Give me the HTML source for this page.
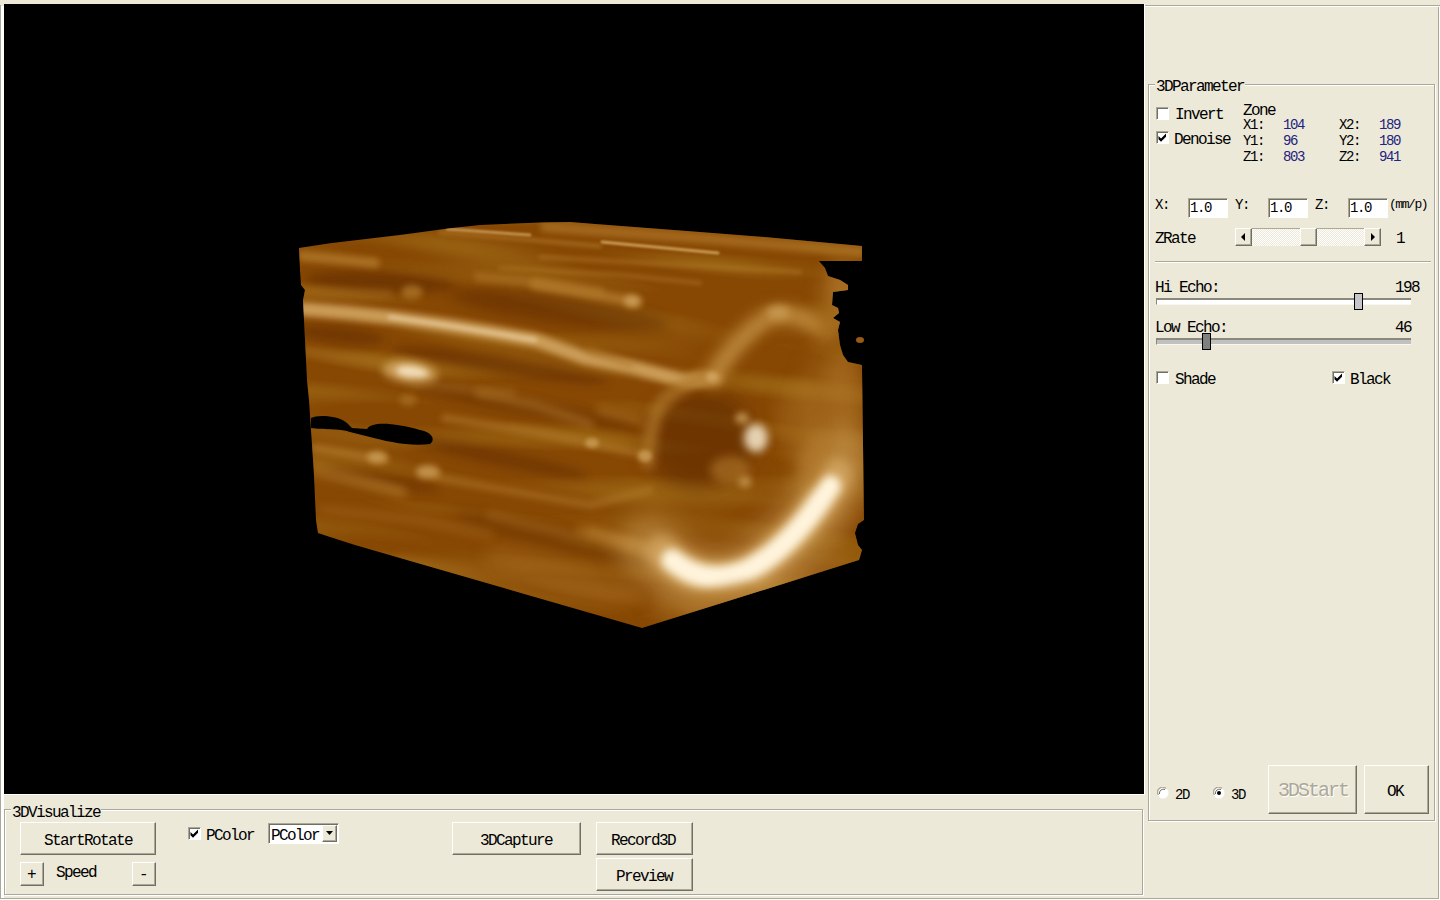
<!DOCTYPE html>
<html><head><meta charset="utf-8">
<style>
*{margin:0;padding:0;box-sizing:border-box}
html,body{width:1440px;height:900px;overflow:hidden;background:#ECE9D8;position:relative;font-family:"Liberation Mono";color:#000}
.a{position:absolute}
.t{position:absolute;font-size:16px;letter-spacing:-1.6px;line-height:16px;white-space:pre}
.s{position:absolute;font-size:14px;letter-spacing:-1.4px;line-height:14px;white-space:pre}
.gl{position:absolute;background:#ACA899}
.wl{position:absolute;background:#FFFFFF}
.etch{position:absolute;border:1px solid #ACA899;box-shadow:1px 1px 0 #fff, inset 1px 1px 0 #fff}
.btn{position:absolute;background:#ECE9D8;border-top:1px solid #fff;border-left:1px solid #fff;border-right:1px solid #716F64;border-bottom:1px solid #716F64;box-shadow:inset -1px -1px 0 #ACA899}
.cb{position:absolute;width:13px;height:13px;background:#fff;border-top:1px solid #ACA899;border-left:1px solid #ACA899;border-right:1px solid #fff;border-bottom:1px solid #fff;box-shadow:inset 1px 1px 0 #716F64}
.edit{position:absolute;background:#fff;border-top:1px solid #ACA899;border-left:1px solid #ACA899;border-right:1px solid #fff;border-bottom:1px solid #fff;box-shadow:inset 1px 1px 0 #716F64}
.lbl{background:#ECE9D8}
.blue{color:#22227F}
</style></head><body>
<!-- outer etched frame -->
<div class="gl" style="left:0;top:5px;width:1px;height:894px"></div>
<div class="wl" style="left:1px;top:6px;width:3px;height:892px"></div>
<div class="gl" style="left:0;top:898px;width:1439px;height:1px"></div>
<div class="wl" style="left:0;top:899px;width:1440px;height:1px"></div>
<div class="gl" style="left:1438px;top:5px;width:1px;height:894px"></div>
<div class="wl" style="left:1439px;top:5px;width:1px;height:895px"></div>
<div class="gl" style="left:1144px;top:5px;width:1295px;height:1px"></div>
<div class="wl" style="left:1144px;top:6px;width:1294px;height:1px"></div>

<!-- black view -->
<div class="a" id="view" style="left:4px;top:4px;width:1140px;height:790px;background:#000;overflow:hidden">
<svg width="1140" height="790" viewBox="4 4 1140 790" style="position:absolute;left:0;top:0">
<defs>
<clipPath id="cp"><polygon points="299,248 330,243.3 400,235 450,228.3 480,225 540,222.5 570,222 595,224 700,232 770,237.5 862,246 862,261 819,261 825,268 828,276 840,280 848,285 848,290 833,292 832,305 838,308 839,313 833,318 840,322 838,330 840,345 843,355 848,362 862,365 864,520 858,524 855,533 858,545 862,550 860,557 859,560 642,628 355,545 330,537 318,533 316,520 313.7,470 311,430 309,400 307,380 306,360 305,340 304,320 303,300 305,290 301,285 300,270"/></clipPath>
<filter id="b1" filterUnits="userSpaceOnUse" x="200" y="150" width="800" height="550"><feGaussianBlur stdDeviation="1"/></filter>
<filter id="b2" filterUnits="userSpaceOnUse" x="200" y="150" width="800" height="550"><feGaussianBlur stdDeviation="2"/></filter>
<filter id="b3" filterUnits="userSpaceOnUse" x="200" y="150" width="800" height="550"><feGaussianBlur stdDeviation="3"/></filter>
<filter id="b4" filterUnits="userSpaceOnUse" x="200" y="150" width="800" height="550"><feGaussianBlur stdDeviation="4"/></filter>
<filter id="b5" filterUnits="userSpaceOnUse" x="200" y="150" width="800" height="550"><feGaussianBlur stdDeviation="5"/></filter>
<filter id="b6" filterUnits="userSpaceOnUse" x="200" y="150" width="800" height="550"><feGaussianBlur stdDeviation="6"/></filter>
<filter id="b7" filterUnits="userSpaceOnUse" x="200" y="150" width="800" height="550"><feGaussianBlur stdDeviation="7"/></filter>
<filter id="b8" filterUnits="userSpaceOnUse" x="200" y="150" width="800" height="550"><feGaussianBlur stdDeviation="8"/></filter>
<filter id="b10" filterUnits="userSpaceOnUse" x="200" y="150" width="800" height="550"><feGaussianBlur stdDeviation="10"/></filter>
<filter id="b12" filterUnits="userSpaceOnUse" x="200" y="150" width="800" height="550"><feGaussianBlur stdDeviation="12"/></filter>
<filter id="turb" filterUnits="userSpaceOnUse" x="200" y="150" width="800" height="550"><feTurbulence type="fractalNoise" baseFrequency="0.005 0.04" numOctaves="1" seed="7"/><feColorMatrix type="matrix" values="0 0 0 0 0.45  0 0 0 0 0.25  0 0 0 0 0.02  0 0 0 -3.2 1.75"/></filter>
</defs>
<g clip-path="url(#cp)">
<rect x="290" y="215" width="590" height="420" fill="#874804"/>
<g transform="rotate(7 580 420)"><rect x="200" y="150" width="800" height="550" filter="url(#turb)" opacity="0.45"/></g>
<ellipse cx="700" cy="440" rx="55" ry="50" fill="#5a2800" opacity="0.55" transform="rotate(-10 700 440)" filter="url(#b10)"/>
<ellipse cx="560" cy="310" rx="110" ry="14" fill="#5a2800" opacity="0.45" transform="rotate(8 560 310)" filter="url(#b6)"/>
<ellipse cx="380" cy="282" rx="75" ry="10" fill="#5a2800" opacity="0.5" transform="rotate(3 380 282)" filter="url(#b5)"/>
<ellipse cx="340" cy="335" rx="45" ry="8" fill="#5a2800" opacity="0.45" transform="rotate(6 340 335)" filter="url(#b4)"/>
<ellipse cx="500" cy="365" rx="110" ry="8" fill="#5a2800" opacity="0.45" transform="rotate(9 500 365)" filter="url(#b4)"/>
<ellipse cx="520" cy="405" rx="120" ry="8" fill="#5a2800" opacity="0.4" transform="rotate(11 520 405)" filter="url(#b4)"/>
<ellipse cx="380" cy="480" rx="60" ry="7" fill="#5a2800" opacity="0.35" transform="rotate(10 380 480)" filter="url(#b4)"/>
<ellipse cx="500" cy="458" rx="90" ry="8" fill="#5a2800" opacity="0.4" transform="rotate(12 500 458)" filter="url(#b4)"/>
<ellipse cx="560" cy="540" rx="110" ry="10" fill="#5a2800" opacity="0.3" transform="rotate(14 560 540)" filter="url(#b6)"/>
<ellipse cx="830" cy="440" rx="30" ry="90" fill="#b0782a" opacity="0.45" transform="rotate(0 830 440)" filter="url(#b12)"/>
<ellipse cx="790" cy="590" rx="70" ry="25" fill="#b0782a" opacity="0.45" transform="rotate(-17 790 590)" filter="url(#b12)"/>
<ellipse cx="690" cy="600" rx="40" ry="22" fill="#b0782a" opacity="0.35" transform="rotate(-17 690 600)" filter="url(#b10)"/>
<path d="M545,227 L700,238 L860,252" stroke="#b0782a" stroke-width="10" fill="none" stroke-linecap="round" stroke-linejoin="round" opacity="0.7" filter="url(#b3)"/>
<path d="M602,242 L718,253" stroke="#d2a560" stroke-width="3" fill="none" stroke-linecap="round" stroke-linejoin="round" opacity="0.9" filter="url(#b1)"/>
<path d="M440,232 L600,246" stroke="#b0782a" stroke-width="4" fill="none" stroke-linecap="round" stroke-linejoin="round" opacity="0.7" filter="url(#b2)"/>
<path d="M447,229 L530,235" stroke="#d2a560" stroke-width="3" fill="none" stroke-linecap="round" stroke-linejoin="round" opacity="0.8" filter="url(#b1)"/>
<path d="M540,257 L700,266 L800,272" stroke="#b0782a" stroke-width="4" fill="none" stroke-linecap="round" stroke-linejoin="round" opacity="0.55" filter="url(#b2)"/>
<path d="M500,268 L620,275 L700,283" stroke="#b0782a" stroke-width="4" fill="none" stroke-linecap="round" stroke-linejoin="round" opacity="0.5" filter="url(#b2)"/>
<path d="M302,256 L375,263" stroke="#b0782a" stroke-width="10" fill="none" stroke-linecap="round" stroke-linejoin="round" opacity="0.85" filter="url(#b3)"/>
<path d="M302,292 L390,294" stroke="#b0782a" stroke-width="7" fill="none" stroke-linecap="round" stroke-linejoin="round" opacity="0.45" filter="url(#b4)"/>
<ellipse cx="412" cy="292" rx="11" ry="7" fill="#b0782a" opacity="0.75" transform="rotate(0 412 292)" filter="url(#b3)"/>
<path d="M478,277 L540,283 L600,292" stroke="#b0782a" stroke-width="9" fill="none" stroke-linecap="round" stroke-linejoin="round" opacity="0.6" filter="url(#b3)"/>
<path d="M535,284 L637,302" stroke="#b0782a" stroke-width="11" fill="none" stroke-linecap="round" stroke-linejoin="round" opacity="0.85" filter="url(#b3)"/>
<ellipse cx="632" cy="301" rx="8" ry="6" fill="#d2a560" opacity="0.8" transform="rotate(0 632 301)" filter="url(#b3)"/>
<path d="M303,309 L350,313 L395,318 L445,325 L490,332 L535,340 L585,358 L635,368 L685,381 L715,378" stroke="#d2a560" stroke-width="14" fill="none" stroke-linecap="round" stroke-linejoin="round" opacity="0.9" filter="url(#b3)"/>
<path d="M390,317 L445,325 L535,340" stroke="#fff4dc" stroke-width="5" fill="none" stroke-linecap="round" stroke-linejoin="round" opacity="0.4" filter="url(#b2)"/>
<path d="M 700 378 Q 660 395 655 417 Q 648 440 648 462" stroke="#b0782a" stroke-width="14" fill="none" stroke-linecap="round" opacity="0.7" filter="url(#b5)"/>
<path d="M 712 378 Q 730 345 760 322 Q 790 305 825 332" stroke="#b0782a" stroke-width="22" fill="none" stroke-linecap="round" opacity="0.8" filter="url(#b7)"/>
<path d="M 716 374 Q 735 342 765 320 Q 790 308 815 325" stroke="#d2a560" stroke-width="10" fill="none" stroke-linecap="round" opacity="0.45" filter="url(#b6)"/>
<ellipse cx="840" cy="300" rx="22" ry="40" fill="#b0782a" opacity="0.5" transform="rotate(0 840 300)" filter="url(#b8)"/>
<ellipse cx="845" cy="400" rx="18" ry="50" fill="#b0782a" opacity="0.45" transform="rotate(0 845 400)" filter="url(#b8)"/>
<ellipse cx="778" cy="312" rx="12" ry="7" fill="#d2a560" opacity="0.7" transform="rotate(0 778 312)" filter="url(#b4)"/>
<ellipse cx="712" cy="377" rx="6" ry="5" fill="#d2a560" opacity="0.85" transform="rotate(0 712 377)" filter="url(#b2)"/>
<ellipse cx="845" cy="290" rx="15" ry="25" fill="#b0782a" opacity="0.5" transform="rotate(0 845 290)" filter="url(#b6)"/>
<path d="M302,350 L340,357 L380,362" stroke="#b0782a" stroke-width="8" fill="none" stroke-linecap="round" stroke-linejoin="round" opacity="0.45" filter="url(#b4)"/>
<ellipse cx="410" cy="372" rx="28" ry="11" fill="#d2a560" opacity="0.9" transform="rotate(8 410 372)" filter="url(#b4)"/>
<ellipse cx="412" cy="372" rx="16" ry="6" fill="#fff4dc" opacity="0.75" transform="rotate(8 412 372)" filter="url(#b3)"/>
<path d="M412,383 L470,390 L512,393" stroke="#b0782a" stroke-width="7" fill="none" stroke-linecap="round" stroke-linejoin="round" opacity="0.5" filter="url(#b4)"/>
<path d="M479,393 L535,405 L590,424" stroke="#b0782a" stroke-width="9" fill="none" stroke-linecap="round" stroke-linejoin="round" opacity="0.55" filter="url(#b4)"/>
<ellipse cx="408" cy="400" rx="9" ry="6" fill="#b0782a" opacity="0.6" transform="rotate(0 408 400)" filter="url(#b3)"/>
<path d="M445,418 L535,432 L590,443 L645,455" stroke="#b0782a" stroke-width="8" fill="none" stroke-linecap="round" stroke-linejoin="round" opacity="0.6" filter="url(#b3)"/>
<ellipse cx="592" cy="443" rx="7" ry="5" fill="#d2a560" opacity="0.7" transform="rotate(0 592 443)" filter="url(#b2)"/>
<ellipse cx="645" cy="456" rx="7" ry="6" fill="#d2a560" opacity="0.7" transform="rotate(0 645 456)" filter="url(#b2)"/>
<path d="M437,478 L535,495 L590,505 L650,490" stroke="#b0782a" stroke-width="8" fill="none" stroke-linecap="round" stroke-linejoin="round" opacity="0.55" filter="url(#b3)"/>
<path d="M590,351 L630,365" stroke="#b0782a" stroke-width="8" fill="none" stroke-linecap="round" stroke-linejoin="round" opacity="0.5" filter="url(#b3)"/>
<path d="M600,410 L640,420" stroke="#b0782a" stroke-width="8" fill="none" stroke-linecap="round" stroke-linejoin="round" opacity="0.5" filter="url(#b4)"/>
<ellipse cx="742" cy="418" rx="7" ry="6" fill="#d2a560" opacity="0.7" transform="rotate(0 742 418)" filter="url(#b3)"/>
<ellipse cx="756" cy="438" rx="12" ry="14" fill="#fff4dc" opacity="0.8" transform="rotate(0 756 438)" filter="url(#b4)"/>
<ellipse cx="730" cy="470" rx="20" ry="14" fill="#b0782a" opacity="0.6" transform="rotate(0 730 470)" filter="url(#b5)"/>
<ellipse cx="745" cy="482" rx="7" ry="6" fill="#d2a560" opacity="0.6" transform="rotate(0 745 482)" filter="url(#b3)"/>
<ellipse cx="800" cy="420" rx="25" ry="40" fill="#b0782a" opacity="0.35" transform="rotate(0 800 420)" filter="url(#b8)"/>
<path d="M315,448 L385,460" stroke="#b0782a" stroke-width="9" fill="none" stroke-linecap="round" stroke-linejoin="round" opacity="0.7" filter="url(#b3)"/>
<ellipse cx="377" cy="457" rx="10" ry="6" fill="#d2a560" opacity="0.75" transform="rotate(0 377 457)" filter="url(#b3)"/>
<path d="M315,472 L400,492" stroke="#b0782a" stroke-width="9" fill="none" stroke-linecap="round" stroke-linejoin="round" opacity="0.55" filter="url(#b4)"/>
<ellipse cx="428" cy="472" rx="12" ry="7" fill="#d2a560" opacity="0.75" transform="rotate(0 428 472)" filter="url(#b3)"/>
<path d="M323,510 L420,520 L490,535" stroke="#b0782a" stroke-width="8" fill="none" stroke-linecap="round" stroke-linejoin="round" opacity="0.35" filter="url(#b5)"/>
<path d="M490,515 L590,540 L660,555" stroke="#b0782a" stroke-width="9" fill="none" stroke-linecap="round" stroke-linejoin="round" opacity="0.4" filter="url(#b5)"/>
<path d="M580,530 L640,545" stroke="#b0782a" stroke-width="8" fill="none" stroke-linecap="round" stroke-linejoin="round" opacity="0.6" filter="url(#b4)"/>
<path d="M400,560 L520,580 L640,600" stroke="#b0782a" stroke-width="10" fill="none" stroke-linecap="round" stroke-linejoin="round" opacity="0.3" filter="url(#b6)"/>
<path d="M592,532 L645,548" stroke="#b0782a" stroke-width="10" fill="none" stroke-linecap="round" stroke-linejoin="round" opacity="0.7" filter="url(#b4)"/>
<ellipse cx="560" cy="575" rx="80" ry="18" fill="#b0782a" opacity="0.35" transform="rotate(16 560 575)" filter="url(#b8)"/>
<path d="M317,465 L405,493" stroke="#b0782a" stroke-width="10" fill="none" stroke-linecap="round" stroke-linejoin="round" opacity="0.4" filter="url(#b5)"/>
<path d="M 650 548 Q 700 598 755 570 Q 805 542 842 462" stroke="#d2a560" stroke-width="64" fill="none" stroke-linecap="round" opacity="0.5" filter="url(#b12)"/>
<path d="M 662 552 Q 702 592 750 570 Q 798 544 836 475" stroke="#d2a560" stroke-width="34" fill="none" stroke-linecap="round" opacity="0.85" filter="url(#b6)"/>
<path d="M 672 560 Q 705 588 748 570 Q 792 547 830 486" stroke="#fff4dc" stroke-width="22" fill="none" stroke-linecap="round" opacity="1.0" filter="url(#b4)"/>
<ellipse cx="815" cy="460" rx="12" ry="28" fill="#b0782a" opacity="0.6" transform="rotate(20 815 460)" filter="url(#b6)"/>
<ellipse cx="720" cy="598" rx="40" ry="10" fill="#b0782a" opacity="0.5" transform="rotate(-17 720 598)" filter="url(#b6)"/>
</g>
<path d="M311,418 C318,414 340,416 347,423 L352,428 L367,429 C372,421 395,423 420,430 C432,432 436,440 430,444 C410,447 385,441 370,437 L350,432 C340,428 322,430 311,428Z" fill="#000"/>
<ellipse cx="860" cy="340" rx="4" ry="3" fill="#9a5a14"/>
</svg>
</div>
<div class="wl" style="left:1144px;top:4px;width:1px;height:791px"></div>
<div class="wl" style="left:4px;top:794px;width:1141px;height:1px"></div>

<!-- 3DParameter group -->
<div class="etch" style="left:1148px;top:84px;width:287px;height:737px"></div>
<div class="t lbl" style="left:1155px;top:79px;padding:0 1px">3DParameter</div>

<!-- right panel contents -->
<div class="cb" style="left:1156px;top:107px"></div>
<div class="t" style="left:1175px;top:107px">Invert</div>
<div class="cb" style="left:1156px;top:131px"></div>
<svg class="a" style="left:1156px;top:131px" width="13" height="13"><path d="M2.5 5 L5 7.5 L10 2.5 L10 5.8 L5 10.8 L2.5 8.3Z" fill="#000"/></svg>
<div class="t" style="left:1174px;top:132px">Denoise</div>
<div class="t" style="left:1243px;top:103px">Zone</div>
<div class="s" style="left:1243px;top:118px">X1:</div>
<div class="s" style="left:1243px;top:134px">Y1:</div>
<div class="s" style="left:1243px;top:150px">Z1:</div>
<div class="s blue" style="left:1283px;top:118px">104</div>
<div class="s blue" style="left:1283px;top:134px">96</div>
<div class="s blue" style="left:1283px;top:150px">803</div>
<div class="s" style="left:1339px;top:118px">X2:</div>
<div class="s" style="left:1339px;top:134px">Y2:</div>
<div class="s" style="left:1339px;top:150px">Z2:</div>
<div class="s blue" style="left:1379px;top:118px">189</div>
<div class="s blue" style="left:1379px;top:134px">180</div>
<div class="s blue" style="left:1379px;top:150px">941</div>

<div class="s" style="left:1155px;top:198px">X:</div>
<div class="edit" style="left:1188px;top:198px;width:40px;height:20px"></div>
<div class="s" style="left:1190px;top:201px">1.0</div>
<div class="s" style="left:1235px;top:198px">Y:</div>
<div class="edit" style="left:1268px;top:198px;width:40px;height:20px"></div>
<div class="s" style="left:1270px;top:201px">1.0</div>
<div class="s" style="left:1315px;top:198px">Z:</div>
<div class="edit" style="left:1348px;top:198px;width:40px;height:20px"></div>
<div class="s" style="left:1350px;top:201px">1.0</div>
<div class="a" style="left:1389px;top:198px;font-size:13px;letter-spacing:-1.45px;line-height:13px;white-space:pre">(mm/p)</div>

<div class="t" style="left:1155px;top:231px">ZRate</div>
<!-- scrollbar -->
<div class="a" style="left:1235px;top:228px;width:146px;height:18px;background-color:#F4F2E8;background-image:repeating-conic-gradient(#ECE9D8 0 25%,#FFFFFF 0 50%);background-size:2px 2px;border-top:1px solid #ACA899"></div>
<div class="btn" style="left:1235px;top:228px;width:17px;height:18px"></div>
<svg class="a" style="left:1235px;top:228px" width="17" height="18"><path d="M6 9 L10 5 L10 13Z" fill="#000"/></svg>
<div class="btn" style="left:1300px;top:228px;width:17px;height:18px"></div>
<div class="btn" style="left:1364px;top:228px;width:17px;height:18px"></div>
<svg class="a" style="left:1364px;top:228px" width="17" height="18"><path d="M11 9 L7 5 L7 13Z" fill="#000"/></svg>
<div class="t" style="left:1396px;top:231px">1</div>

<div class="gl" style="left:1155px;top:261px;width:276px;height:1px"></div>
<div class="wl" style="left:1155px;top:262px;width:276px;height:1px"></div>

<div class="t" style="left:1155px;top:280px">Hi Echo:</div>
<div class="t" style="left:1395px;top:280px">198</div>
<div class="a" style="left:1156px;top:298px;width:255px;height:7px;background:#fff;border-top:2px solid #8A887C;border-left:1px solid #8A887C;border-bottom:1px solid #F8F8F0"></div>
<div class="a" style="left:1354px;top:293px;width:9px;height:17px;background:#C6C6CA;border:1px solid #000"></div>

<div class="t" style="left:1155px;top:320px">Low Echo:</div>
<div class="t" style="left:1395px;top:320px">46</div>
<div class="a" style="left:1156px;top:338px;width:255px;height:7px;background:#C0C0C0;border-top:2px solid #8A887C;border-left:1px solid #8A887C;border-bottom:1px solid #F8F8F0"></div>
<div class="a" style="left:1202px;top:333px;width:9px;height:17px;background:#808080;border:1px solid #000"></div>

<div class="cb" style="left:1156px;top:371px"></div>
<div class="t" style="left:1175px;top:372px">Shade</div>
<div class="cb" style="left:1332px;top:371px"></div>
<svg class="a" style="left:1332px;top:371px" width="13" height="13"><path d="M2.5 5 L5 7.5 L10 2.5 L10 5.8 L5 10.8 L2.5 8.3Z" fill="#000"/></svg>
<div class="t" style="left:1350px;top:372px">Black</div>

<svg class="a" style="left:1157px;top:787px" width="12" height="12"><circle cx="6" cy="6" r="5.5" fill="#fff"/><path d="M1.5 8 A5 5 0 0 1 9 1.5" stroke="#ACA899" stroke-width="1.3" fill="none"/><path d="M2.5 7 A4 4 0 0 1 8 2.5" stroke="#716F64" stroke-width="1" fill="none"/></svg>
<div class="s" style="left:1175px;top:788px">2D</div>
<svg class="a" style="left:1213px;top:787px" width="12" height="12"><circle cx="6" cy="6" r="5.5" fill="#fff"/><path d="M1.5 8 A5 5 0 0 1 9 1.5" stroke="#ACA899" stroke-width="1.3" fill="none"/><path d="M2.5 7 A4 4 0 0 1 8 2.5" stroke="#716F64" stroke-width="1" fill="none"/><circle cx="6" cy="6" r="2" fill="#000"/></svg>
<div class="s" style="left:1231px;top:788px">3D</div>

<div class="btn" style="left:1268px;top:765px;width:89px;height:49px"></div>
<div class="a" style="left:1278px;top:781px;font-size:20px;letter-spacing:-2px;line-height:20px;color:#ACA899;text-shadow:1px 1px 0 #fff;white-space:pre">3DStart</div>
<div class="btn" style="left:1364px;top:765px;width:65px;height:49px"></div>
<div class="t" style="left:1387px;top:784px">OK</div>


<!-- 3DVisualize group -->
<div class="etch" style="left:4px;top:809px;width:1139px;height:86px"></div>
<div class="t lbl" style="left:11px;top:805px;padding:0 1px">3DVisualize</div>

<div class="btn" style="left:20px;top:822px;width:136px;height:33px"></div>
<div class="t" style="left:44px;top:833px">StartRotate</div>
<div class="btn" style="left:20px;top:862px;width:24px;height:24px"></div>
<div class="t" style="left:27px;top:867px">+</div>
<div class="t" style="left:56px;top:865px">Speed</div>
<div class="btn" style="left:132px;top:862px;width:24px;height:24px"></div>
<div class="t" style="left:139px;top:867px">-</div>

<div class="cb" style="left:188px;top:827px"></div>
<svg class="a" style="left:188px;top:827px" width="13" height="13"><path d="M2.5 5 L5 7.5 L10 2.5 L10 5.8 L5 10.8 L2.5 8.3Z" fill="#000"/></svg>
<div class="t" style="left:206px;top:828px">PColor</div>
<div class="edit" style="left:268px;top:823px;width:71px;height:21px"></div>
<div class="t" style="left:271px;top:828px">PColor</div>
<div class="btn" style="left:322px;top:825px;width:15px;height:17px"></div>
<svg class="a" style="left:322px;top:825px" width="15" height="17"><path d="M4 6 L11 6 L7.5 10Z" fill="#000"/></svg>

<div class="btn" style="left:452px;top:822px;width:129px;height:33px"></div>
<div class="t" style="left:480px;top:833px">3DCapture</div>
<div class="btn" style="left:596px;top:822px;width:97px;height:33px"></div>
<div class="t" style="left:611px;top:833px">Record3D</div>
<div class="btn" style="left:596px;top:858px;width:97px;height:33px"></div>
<div class="t" style="left:616px;top:869px">Preview</div>

</body></html>
